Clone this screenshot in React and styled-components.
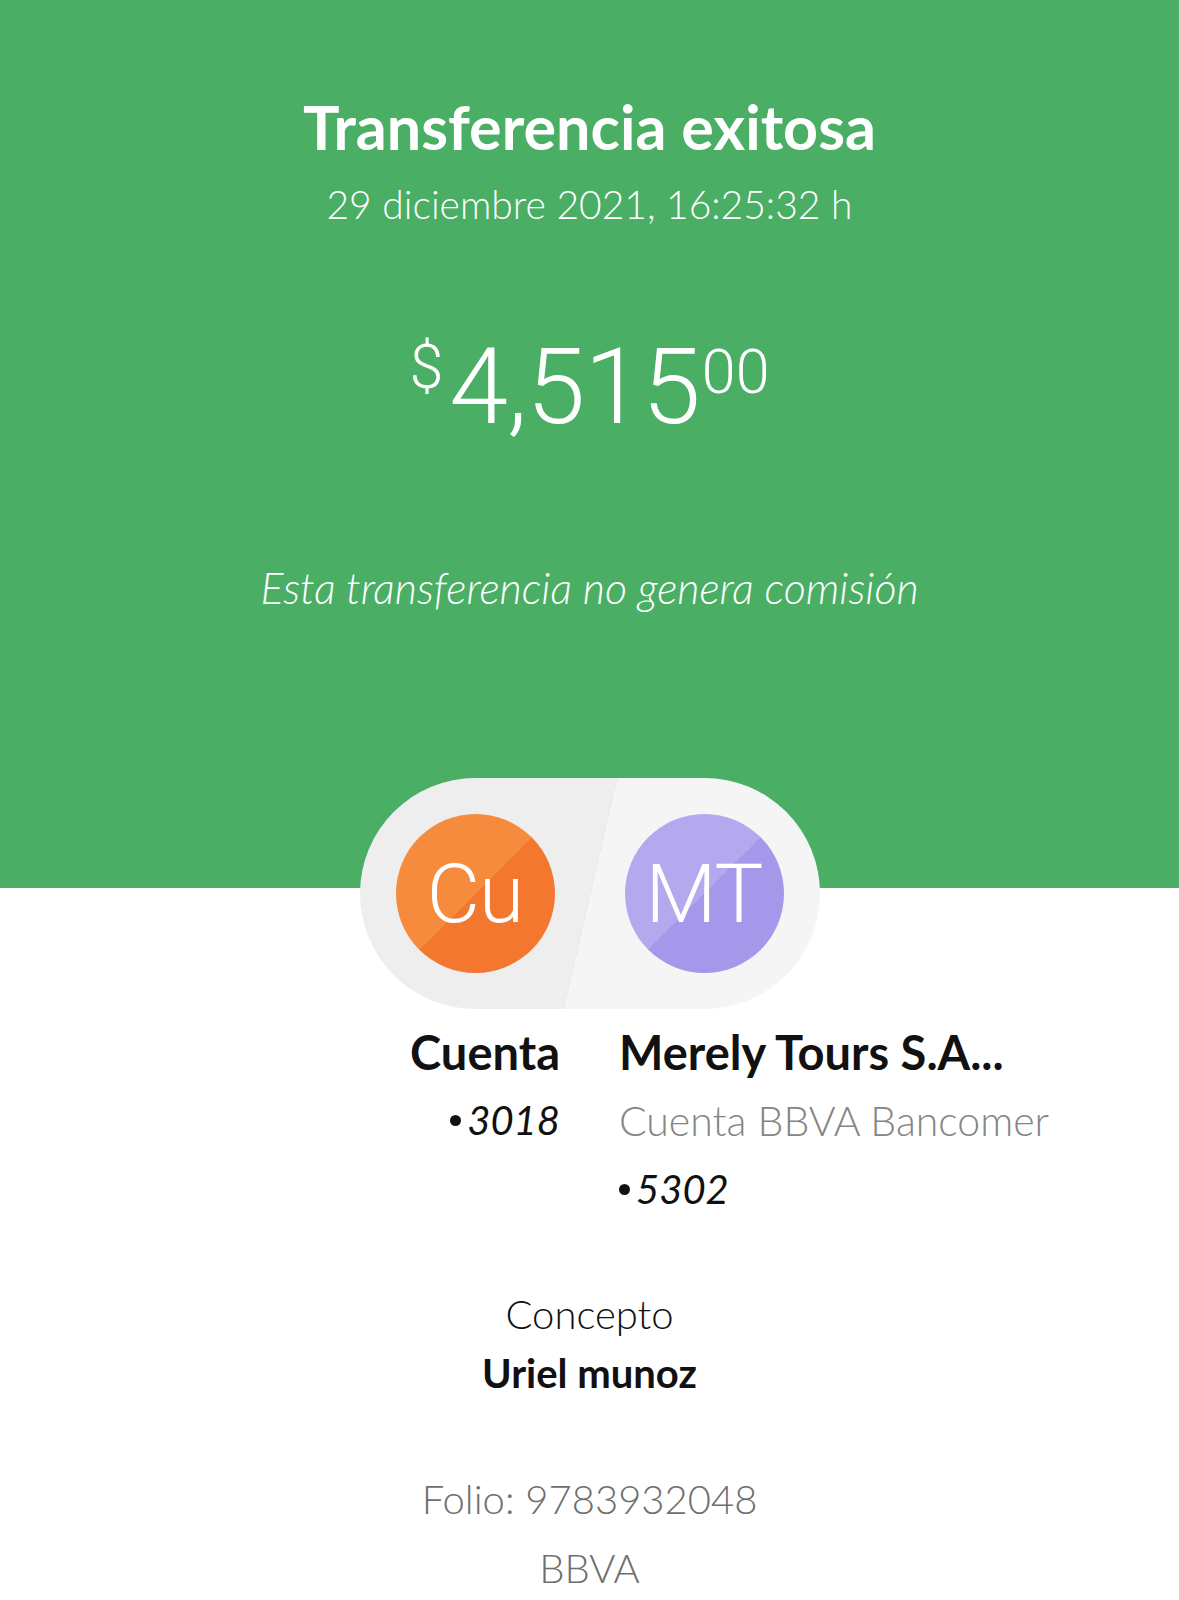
import styled, { createGlobalStyle } from "styled-components";

const GlobalStyle = createGlobalStyle`
  html, body {
    margin: 0;
    padding: 0;
    background: #ffffff;
  }
  body {
    font-family: "Lato", "Open Sans", sans-serif;
    -webkit-font-smoothing: antialiased;
  }
`;

const Page = styled.div`
  width: 1179px;
  min-height: 1600px;
  overflow: hidden;
  background: #ffffff;
`;

const Header = styled.header`
  box-sizing: border-box;
  height: 888px;
  padding-top: 91px;
  background: #4aae65;
  color: #ffffff;
  display: flex;
  flex-direction: column;
  align-items: center;
`;

const Title = styled.h1`
  margin: 0;
  font-size: 61px;
  line-height: 72px;
  font-weight: 700;
`;

const DateLine = styled.div`
  margin-top: 17px;
  font-size: 39px;
  line-height: 48px;
  font-weight: 300;
`;

const Amount = styled.div`
  margin-top: 106px;
  display: flex;
  align-items: flex-start;
  font-family: "Roboto", sans-serif;
  font-weight: 300;
  line-height: 1;
`;

const Sup = styled.span`
  font-size: 61px;
  margin-top: ${(p) => p.$offset || 8}px;
  margin-left: ${(p) => p.$gap || 0}px;
`;

const Big = styled.span`
  font-size: 106px;
  letter-spacing: -1px;
  margin-left: 6px;
`;

const Note = styled.p`
  margin: 123px 0 0;
  font-size: 43px;
  line-height: 50px;
  font-style: italic;
  font-weight: 300;
`;

const PillRow = styled.div`
  margin-top: -110px;
  display: flex;
  justify-content: center;
`;

const Pill = styled.div`
  box-sizing: border-box;
  width: 460px;
  height: 231px;
  padding: 0 36px;
  border-radius: 116px;
  background: linear-gradient(103deg, #eeeeee 50%, #e2e2e2 50%, #f5f5f5 calc(50% + 1px));
  display: flex;
  align-items: center;
  justify-content: space-between;
`;

const Avatar = styled.div`
  width: 159px;
  height: 159px;
  border-radius: 50%;
  background: linear-gradient(135deg, ${(p) => p.$light} 50%, ${(p) => p.$dark} 50%);
  color: #ffffff;
  display: flex;
  align-items: center;
  justify-content: center;
  font-family: "Roboto", sans-serif;
  font-weight: 300;
  font-size: 82px;
  letter-spacing: -1px;
`;

const Parties = styled.div`
  margin-top: 15px;
  display: grid;
  grid-template-columns: 1fr 1fr;
  column-gap: 59px;
`;

const Party = styled.div`
  display: flex;
  flex-direction: column;
  align-items: ${(p) => (p.$right ? "flex-start" : "flex-end")};
`;

const Name = styled.div`
  font-size: 47px;
  line-height: 56px;
  font-weight: 700;
  color: #111111;
`;

const Bank = styled.div`
  margin-top: 17px;
  font-size: 41px;
  line-height: 48px;
  font-weight: 300;
  color: #858585;
`;

const Account = styled.div`
  margin-top: ${(p) => p.$top}px;
  font-size: 40px;
  line-height: 48px;
  color: #111111;
  display: flex;
  align-items: center;
  gap: 6px;
`;

const Dot = styled.span`
  width: 11px;
  height: 11px;
  border-radius: 50%;
  background: #111111;
`;

const Digits = styled.span`
  font-style: italic;
`;

const Details = styled.div`
  display: flex;
  flex-direction: column;
  align-items: center;
`;

const Label = styled.div`
  margin-top: ${(p) => p.$top}px;
  font-size: 40px;
  line-height: 48px;
  font-weight: ${(p) => (p.$bold ? 700 : 300)};
  color: ${(p) => p.$color || "#111111"};
`;

export default function App() {
  return (
    <>
      <GlobalStyle />
      <Page>
        <Header>
          <Title>Transferencia exitosa</Title>
          <DateLine>29 diciembre 2021, 16:25:32 h</DateLine>
          <Amount>
            <Sup $offset={3}>$</Sup>
            <Big>4,515</Big>
            <Sup $gap={2}>00</Sup>
          </Amount>
          <Note>Esta transferencia no genera comisión</Note>
        </Header>

        <PillRow>
          <Pill>
            <Avatar $light="#f68b3d" $dark="#f3772e">Cu</Avatar>
            <Avatar $light="#b4a9ef" $dark="#a597e9">MT</Avatar>
          </Pill>
        </PillRow>

        <Parties>
          <Party>
            <Name>Cuenta</Name>
            <Account $top={16}>
              <Dot />
              <Digits>3018</Digits>
            </Account>
          </Party>
          <Party $right>
            <Name>Merely Tours S.A...</Name>
            <Bank>Cuenta BBVA Bancomer</Bank>
            <Account $top={20}>
              <Dot />
              <Digits>5302</Digits>
            </Account>
          </Party>
        </Parties>

        <Details>
          <Label $top={77}>Concepto</Label>
          <Label $top={11} $bold>
            Uriel munoz
          </Label>
          <Label $top={78} $color="#6e6e6e">
            Folio: 9783932048
          </Label>
          <Label $top={21} $color="#6e6e6e">
            BBVA
          </Label>
        </Details>
      </Page>
    </>
  );
}
